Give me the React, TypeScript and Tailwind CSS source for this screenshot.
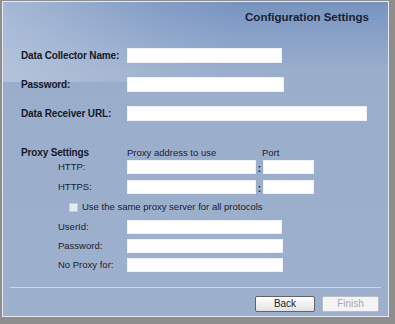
const FONT = { fontFamily: '"Liberation Sans", Arial, sans-serif' };

function Field({ w }: { w: number }) {
  return <div className="h-full bg-white border border-[#eef1f6]" style={{ width: w }} />;
}

function MainRow({ label, w, h = 15, mt }: { label: string; w: number; h?: number; mt: string }) {
  return (
    <div className={`flex items-center ${mt}`} style={{ height: h }}>
      <div className="w-[106px] whitespace-nowrap text-[10px] tracking-[-0.15px] font-bold text-[#15192a]">{label}</div>
      <Field w={w} />
    </div>
  );
}

function SubRow({ label, w, mt }: { label: string; w: number; mt: string }) {
  return (
    <div className={`flex items-center h-[14px] ${mt}`}>
      <div className="w-[37px]" />
      <div className="w-[69px] whitespace-nowrap text-[9.5px] text-[#1a1e2c]">{label}</div>
      <Field w={w} />
    </div>
  );
}

function ProxyRow({ label, mt }: { label: string; mt: string }) {
  return (
    <div className={`flex items-center h-[14px] ${mt}`}>
      <div className="w-[37px]" />
      <div className="w-[69px] text-[9.5px] text-[#1a1e2c]">{label}</div>
      <Field w={129} />
      <div className="w-[7px] text-center text-[10px] font-bold text-[#1a1e2c] leading-none pt-[3px]">:</div>
      <Field w={51} />
    </div>
  );
}

export default function App() {
  return (
    <div className="w-[395px] h-[324px] bg-[#8e8e8e] pl-[2px] pt-[1px] pr-[6px] pb-[7px]" style={FONT}>
      <div className="h-full border border-[#e4e9f1] bg-[linear-gradient(180deg,#7893c0_0px,#86a0c8_30px,#9aaecc_70px,#9db0cc_100%)] relative overflow-hidden">
        <div className="absolute inset-x-0 top-0 h-[80px] bg-[linear-gradient(90deg,rgba(196,208,226,0.6)_0%,rgba(196,208,226,0.15)_40%,rgba(196,208,226,0)_60%)] pointer-events-none" />
        <div className="relative">
          <div className="pt-[9px] pr-[19px] text-right text-[11.5px] leading-[13px] font-bold text-[#1a1f33]">
            Configuration Settings
          </div>
          <div className="pl-[18px]">
            <MainRow label="Data Collector Name:" w={155} mt="mt-[24px]" />
            <MainRow label="Password:" w={157} mt="mt-[14px]" />
            <MainRow label="Data Receiver URL:" w={240} mt="mt-[14px]" />

            <div className="flex items-end h-[11px] mt-[26px]">
              <div className="w-[106px] whitespace-nowrap text-[10px] tracking-[-0.15px] font-bold leading-[11px] text-[#15192a]">Proxy Settings</div>
              <div className="w-[135px] text-[9.5px] leading-[11px] text-[#1a1e2c]">Proxy address to use</div>
              <div className="text-[9.5px] leading-[11px] text-[#1a1e2c]">Port</div>
            </div>
            <ProxyRow label="HTTP:" mt="mt-[2px]" />
            <ProxyRow label="HTTPS:" mt="mt-[6px]" />

            <div className="flex items-center h-[12px] mt-[7px] pl-[48px] gap-[4px]">
              <div className="w-[9px] h-[9px] bg-[#e6ebf2] border border-[#c3ccd9]" />
              <span className="text-[9.5px] text-[#1a1e2c]">Use the same proxy server for all protocols</span>
            </div>

            <SubRow label="UserId:" w={155} mt="mt-[7px]" />
            <SubRow label="Password:" w={156} mt="mt-[5px]" />
            <SubRow label="No Proxy for:" w={156} mt="mt-[5px]" />
          </div>

          <div className="mt-[15px] mx-[7px] border-t border-[#cdd8e8]" />

          <div className="flex justify-end gap-[7px] pr-[9px] mt-[8px]">
            <button className="w-[60px] h-[16px] rounded-[2px] border border-[#5f646c] bg-[linear-gradient(180deg,#ffffff,#e2e2e2)] text-[10px] text-[#1a1a1a] leading-none">
              Back
            </button>
            <button className="w-[57px] h-[16px] rounded-[2px] border border-[#b8bec8] bg-[#f4f4f4] text-[10px] text-[#a3a8b0] leading-none">
              Finish
            </button>
          </div>
        </div>
      </div>
    </div>
  );
}
